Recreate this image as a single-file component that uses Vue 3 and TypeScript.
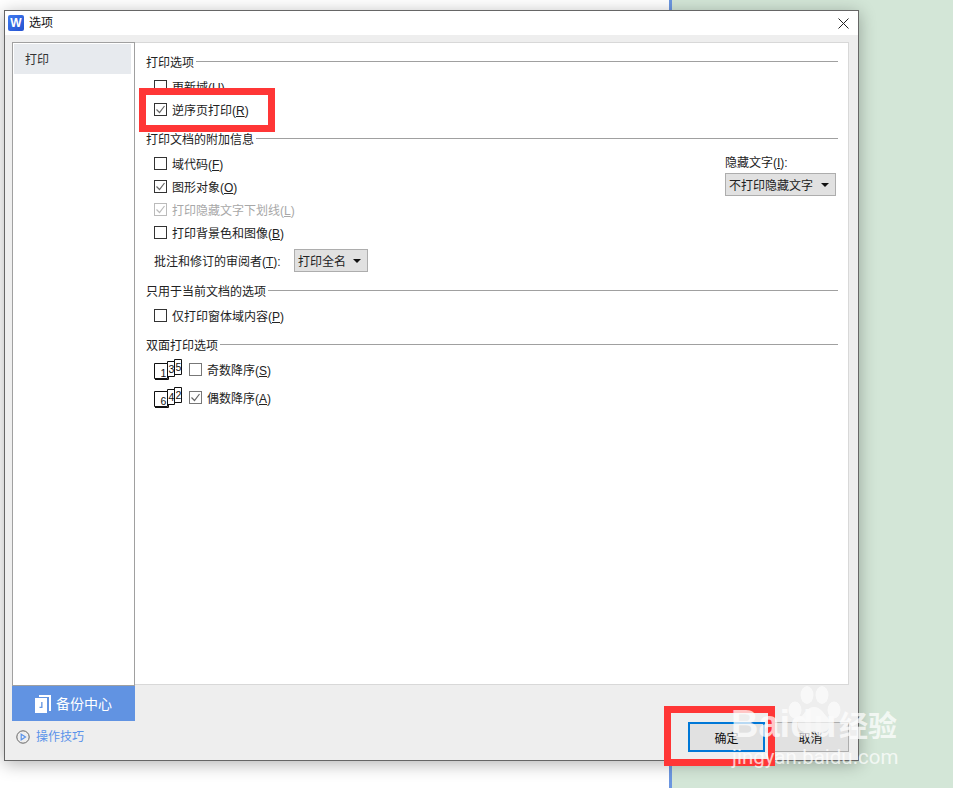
<script setup lang="ts">
interface Opt { text: string; key: string; checked?: boolean; disabled?: boolean }
const first: Opt[] = [
  { text: '更新域', key: 'U' },
  { text: '逆序页打印', key: 'R', checked: true },
]
const second: Opt[] = [
  { text: '域代码', key: 'F' },
  { text: '图形对象', key: 'O', checked: true },
  { text: '打印隐藏文字下划线', key: 'L', checked: true, disabled: true },
  { text: '打印背景色和图像', key: 'B' },
]
const third: Opt[] = [{ text: '仅打印窗体域内容', key: 'P' }]
const duplex = [
  { text: '奇数降序', key: 'S', checked: false, nums: ['1', '3', '5'] },
  { text: '偶数降序', key: 'A', checked: true, nums: ['6', '4', '2'] },
]
</script>

<template>
  <div class="desktop">
    <div class="doc"></div>
    <div class="rule"></div>
    <div class="green"></div>

    <div class="dialog">
      <header class="titlebar">
        <span class="logo">W</span>
        <span class="title">选项</span>
        <svg class="close" width="11" height="11" viewBox="0 0 11 11"><path d="M.5.5l10 10M10.5.5l-10 10" stroke="#222" stroke-width="1" fill="none"/></svg>
      </header>
      <div class="body">
        <aside class="side">
          <div class="list"><div class="item">打印</div></div>
          <div class="backup">
            <svg width="16" height="18" viewBox="0 0 16 18"><path d="M4 0h12v16h-2V2H4z" fill="#fff"/><path d="M0 3h12v15H0z" fill="#fff"/><path d="M7.500 7v6H4.500v-1.300h1.700V7z" fill="#6193e2"/></svg>
            <span>备份中心</span>
          </div>
          <div class="tips">
            <svg width="14" height="14" viewBox="0 0 14 14"><circle cx="7" cy="7" r="6.200" fill="none" stroke="#666"/><path d="M5.200 4.200L9.500 7l-4.300 2.800z" fill="none" stroke="#5a93ea" stroke-width="1.200"/></svg>
            <span>操作技巧</span>
          </div>
        </aside>

        <div class="main">
          <div class="pane">
            <section class="sec sec1">
              <div class="head"><span>打印选项</span><i></i></div>
              <label v-for="o in first" :key="o.key" class="row">
                <span class="box"><svg v-if="o.checked" width="11" height="11" viewBox="0 0 11 11"><path d="M1.500 5.500l3 3 5-6.500" fill="none" stroke="#666" stroke-width="1.200"/></svg></span>
                <span class="txt">{{ o.text }}(<u>{{ o.key }}</u>)</span>
              </label>
            </section>

            <section class="sec sec2">
              <div class="head"><span>打印文档的附加信息</span><i></i></div>
              <div class="split">
                <div>
                  <label v-for="o in second" :key="o.key" class="row" :class="{ off: o.disabled }">
                    <span class="box"><svg v-if="o.checked" width="11" height="11" viewBox="0 0 11 11"><path d="M1.500 5.500l3 3 5-6.500" fill="none" stroke="#666" stroke-width="1.200"/></svg></span>
                    <span class="txt">{{ o.text }}(<u>{{ o.key }}</u>)</span>
                  </label>
                  <div class="reviewer">
                    <span>批注和修订的审阅者(<u>T</u>):</span>
                    <div class="select small"><span>打印全名</span><b></b></div>
                  </div>
                </div>
                <div class="hidden-col">
                  <div class="hidden-label">隐藏文字(<u>I</u>):</div>
                  <div class="select wide"><span>不打印隐藏文字</span><b></b></div>
                </div>
              </div>
            </section>

            <section class="sec sec3">
              <div class="head"><span>只用于当前文档的选项</span><i></i></div>
              <label v-for="o in third" :key="o.key" class="row">
                <span class="box"></span>
                <span class="txt">{{ o.text }}(<u>{{ o.key }}</u>)</span>
              </label>
            </section>

            <section class="sec sec4">
              <div class="head"><span>双面打印选项</span><i></i></div>
              <label v-for="d in duplex" :key="d.key" class="row duplex">
                <svg class="pages" width="29" height="21" viewBox="0 0 29 21">
                  <path d="M20.500.5h7v15h-7z" fill="#fff" stroke="#111"/>
                  <path d="M13.500 2.500h7v15h-7z" fill="#fff" stroke="#111"/>
                  <path d="M.5 4.500h13v15H.5z" fill="#fff" stroke="#111"/>
                  <path d="M1 20.500h13.500V18" fill="none" stroke="#111"/>
                  <text x="6.500" y="18" class="pnum">{{ d.nums[0] }}</text>
                  <text x="14.400" y="14" class="pnum">{{ d.nums[1] }}</text>
                  <text x="21.400" y="12" class="pnum">{{ d.nums[2] }}</text>
                </svg>
                <span class="box soft"><svg v-if="d.checked" width="11" height="11" viewBox="0 0 11 11"><path d="M1.500 5.500l3 3 5-6.500" fill="none" stroke="#666" stroke-width="1.200"/></svg></span>
                <span class="txt">{{ d.text }}(<u>{{ d.key }}</u>)</span>
              </label>
            </section>
          </div>
          <div class="actions">
            <button class="btn primary">确定</button>
            <button class="btn">取消</button>
          </div>
        </div>
      </div>
    </div>

    <div class="mark mark-a"></div>
    <div class="mark mark-b"></div>

    <div class="watermark">
      <svg class="paw" width="54" height="48" viewBox="0 0 54 48">
        <ellipse cx="8" cy="24" rx="6.500" ry="8.500" fill="#fff"/>
        <ellipse cx="20" cy="9" rx="6.500" ry="9" fill="#fff"/>
        <ellipse cx="35" cy="9" rx="6.500" ry="9" fill="#fff"/>
        <ellipse cx="47" cy="24" rx="6.500" ry="8.500" fill="#fff"/>
        <path d="M27 21c7 0 9 6 14 11 5 6 1 15-7 14-3 0-4-1-7-1s-5 1-8 1c-8 0-11-8-6-14 5-5 7-11 14-11z" fill="#fff"/>
      </svg>
      <span class="wm-baidu">Baidu</span>
      <span class="wm-jy">经验</span>
      <span class="wm-url">jingyan.baidu.com</span>
    </div>
  </div>
</template>

<style>
html, body { margin: 0; background: #fff; }
</style>

<style scoped>
.desktop {
  position: relative;
  width: 953px;
  height: 788px;
  display: flex;
  overflow: hidden;
  font: 12px/16px "Liberation Sans", "Noto Sans CJK SC", sans-serif;
  color: #222;
}
.doc { width: 669px; background: #fff; }
.rule { width: 3px; background: #6b96e0; }
.green { flex: 1; background: #d3e6d7; }

.dialog {
  position: absolute;
  left: 4px;
  top: 10px;
  width: 855px;
  height: 751px;
  box-sizing: border-box;
  border: 1px solid #666;
  background: #eee;
  display: flex;
  flex-direction: column;
  box-shadow: 0 3px 16px rgba(0, 0, 0, .3);
}
.titlebar {
  height: 24px;
  background: #fff;
  display: flex;
  align-items: center;
  padding-left: 3px;
  flex: none;
}
.logo {
  width: 16px;
  height: 16px;
  border-radius: 2px;
  background: linear-gradient(135deg, #3f7bf0, #2552d0);
  color: #fff;
  font: bold 12px/16px "Liberation Sans", sans-serif;
  text-align: center;
}
.title { margin-left: 5px; font-size: 12px; color: #111; }
.close { margin-left: auto; margin-right: 9px; }

.body {
  flex: 1;
  display: flex;
  padding: 7px 9px 0 7px;
  min-height: 0;
}
.side { width: 123px; flex: none; display: flex; flex-direction: column; }
.list {
  height: 644px;
  box-sizing: border-box;
  background: #fff;
  border: 1px solid #a0a0a0;
  padding: 1px;
  flex: none;
}
.item {
  height: 30px;
  width: 117px;
  background: #e7eaee;
  line-height: 32px;
  padding-left: 11px;
  box-sizing: border-box;
  color: #333;
}
.backup {
  height: 35px;
  background: #6193e2;
  color: #fff;
  font-size: 14px;
  display: flex;
  align-items: center;
  gap: 5px;
  padding-left: 23px;
}
.tips {
  margin-top: 8px;
  display: flex;
  align-items: center;
  gap: 6px;
  padding-left: 4px;
  color: #5a93ea;
}

.main { flex: 1; display: flex; flex-direction: column; min-width: 0; }
.pane {
  height: 643px;
  flex: none;
  box-sizing: border-box;
  background: #fff;
  border: 1px solid #d8d8d8;
  border-left: 0;
  padding: 10px 10px 0 11px;
}
.head {
  display: flex;
  align-items: center;
  gap: 2px;
  height: 16px;
  margin-bottom: 6px;
  color: #222;
}
.head span { padding-top: 3px; }
.head i { flex: 1; height: 1px; background: #a0a0a0; }
.sec2 { margin-top: 9px; }
.sec3 { margin-top: 10px; }
.sec4 { margin-top: 9px; }
.row {
  height: 23px;
  display: flex;
  align-items: center;
  padding-left: 8px;
}
.txt { padding-top: 2px; }
.row.off { color: #a8a8a8; }
.box {
  width: 13px;
  height: 13px;
  flex: none;
  box-sizing: border-box;
  border: 1px solid #333;
  background: #fff;
  margin-right: 5px;
  display: flex;
  align-items: center;
  justify-content: center;
}
.off .box { border-color: #bbb; }
.off .box path { stroke: #bbb; }
.box.soft { border-color: #777; }
.split { display: flex; justify-content: space-between; }
.reviewer {
  margin-top: 5px;
  height: 23px;
  display: flex;
  align-items: center;
  padding-left: 8px;
  gap: 13.400px;
}
.reviewer > span { padding-top: 2px; }
.select {
  height: 23px;
  box-sizing: border-box;
  border: 1px solid #adadad;
  background: #e1e1e1;
  display: flex;
  align-items: center;
  justify-content: space-between;
  padding: 0 6px 0 3px;
}
.select span { padding-top: 2px; }
.select b {
  width: 0;
  height: 0;
  border: 4px solid transparent;
  border-top: 4px solid #111;
  border-bottom: 0;
}
.small { width: 74px; }
.wide { width: 111px; }
.hidden-col { margin-right: 2px; }
.hidden-label { margin-top: 3px; margin-bottom: 2px; }

.duplex + .duplex { margin-top: 5px; }
.pages { flex: none; margin-right: 6px; }
.pnum { font: 10.500px "Liberation Sans", sans-serif; fill: #111; }

.actions {
  display: flex;
  justify-content: flex-end;
  gap: 7px;
  margin-top: 37px;
}
.btn {
  width: 77px;
  height: 30px;
  box-sizing: border-box;
  border: 1px solid #adadad;
  background: #e1e1e1;
  font: 12px "Liberation Sans", "Noto Sans CJK SC", sans-serif;
  color: #111;
  padding: 0;
}
.primary { border: 2px solid #0078d7; }

.mark {
  position: absolute;
  box-sizing: border-box;
  border: 7px solid #ff3636;
}
.mark-a { left: 139px; top: 88px; width: 136px; height: 44px; }
.mark-b { left: 664px; top: 706px; width: 111px; height: 60px; }

.watermark {
  position: absolute;
  left: 725px;
  top: 684px;
  width: 180px;
  height: 90px;
  color: #fff;
  opacity: .72;
  pointer-events: none;
}
.paw { position: absolute; left: 62px; top: 2px; opacity: .9; }
.wm-baidu {
  position: absolute;
  left: 6px;
  top: 18px;
  font: bold 38px/44px "Liberation Sans", sans-serif;
}
.wm-jy {
  position: absolute;
  left: 114px;
  top: 22px;
  font: bold 29px/36px "Noto Sans CJK SC", sans-serif;
}
.wm-url {
  position: absolute;
  left: 7px;
  top: 60px;
  font: 20.500px/26px Roboto, sans-serif;
  white-space: nowrap;
}
</style>
